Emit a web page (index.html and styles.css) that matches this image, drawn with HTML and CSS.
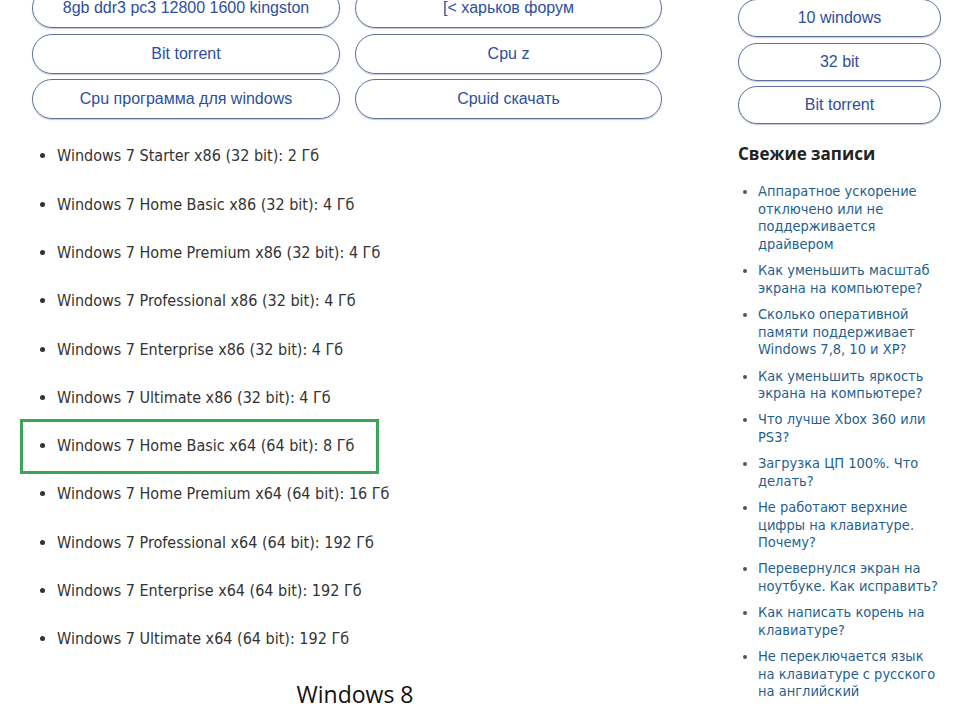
FILE: index.html
```html
<!DOCTYPE html>
<html lang="ru">
<head>
<meta charset="utf-8">
<title>Windows 7 память</title>
<link rel="stylesheet" href="styles.css">
</head>
<body>
<div class="page">
  <main class="content">
    <div class="tags">
      <a class="tag" href="#">8gb ddr3 pc3 12800 1600 kingston</a>
      <a class="tag" href="#">[&lt; харьков форум</a>
      <a class="tag" href="#">Bit torrent</a>
      <a class="tag" href="#">Cpu z</a>
      <a class="tag" href="#">Cpu программа для windows</a>
      <a class="tag" href="#">Cpuid скачать</a>
    </div>
    <ul class="editions">
      <li>Windows 7 Starter x86 (32 bit): 2 Гб</li>
      <li>Windows 7 Home Basic x86 (32 bit): 4 Гб</li>
      <li>Windows 7 Home Premium x86 (32 bit): 4 Гб</li>
      <li>Windows 7 Professional x86 (32 bit): 4 Гб</li>
      <li>Windows 7 Enterprise x86 (32 bit): 4 Гб</li>
      <li>Windows 7 Ultimate x86 (32 bit): 4 Гб</li>
      <li class="marked">Windows 7 Home Basic x64 (64 bit): 8 Гб</li>
      <li>Windows 7 Home Premium x64 (64 bit): 16 Гб</li>
      <li>Windows 7 Professional x64 (64 bit): 192 Гб</li>
      <li>Windows 7 Enterprise x64 (64 bit): 192 Гб</li>
      <li>Windows 7 Ultimate x64 (64 bit): 192 Гб</li>
    </ul>
    <h2 class="section">Windows 8</h2>
  </main>
  <aside class="sidebar">
    <div class="side-tags">
      <a class="tag" href="#">10 windows</a>
      <a class="tag" href="#">32 bit</a>
      <a class="tag" href="#">Bit torrent</a>
    </div>
    <h3 class="side-title">Свежие записи</h3>
    <ul class="recent">
      <li><a href="#">Аппаратное ускорение отключено или не поддерживается драйвером</a></li>
      <li><a href="#">Как уменьшить масштаб экрана на компьютере?</a></li>
      <li><a href="#">Сколько оперативной памяти поддерживает Windows 7,8, 10 и XP?</a></li>
      <li><a href="#">Как уменьшить яркость экрана на компьютере?</a></li>
      <li><a href="#">Что лучше Xbox 360 или PS3?</a></li>
      <li><a href="#">Загрузка ЦП 100%. Что делать?</a></li>
      <li><a href="#">Не работают верхние цифры на клавиатуре. Почему?</a></li>
      <li><a href="#">Перевернулся экран на ноутбуке. Как исправить?</a></li>
      <li><a href="#">Как написать корень на клавиатуре?</a></li>
      <li><a href="#">Не переключается язык на клавиатуре с русского на английский</a></li>
    </ul>
  </aside>
</div>
</body>
</html>
```

FILE: styles.css
```css
html, body {
  margin: 0;
  padding: 0;
  background: #ffffff;
  overflow: hidden;
}
.page {
  display: flex;
  width: 960px;
  height: 708px;
  overflow: hidden;
}
.content {
  width: 646px;
  margin-left: 32px;
  flex: none;
}
.tags {
  display: grid;
  grid-template-columns: 308px 307px;
  column-gap: 15px;
  row-gap: 5.7px;
  margin-top: -12px;
}
.tag {
  display: flex;
  align-items: center;
  justify-content: center;
  height: 40px;
  box-sizing: border-box;
  border: 1px solid #5d7199;
  border-radius: 20px;
  color: #2c4f9e;
  text-decoration: none;
  font-family: "Liberation Sans", Arial, sans-serif;
  font-size: 16px;
  box-shadow: 0 1px 1px rgba(80, 100, 140, 0.35);
}
.editions {
  margin: 13px 0 0 0;
  padding: 0 0 0 25px;
  font-family: "DejaVu Sans Condensed", "DejaVu Sans", sans-serif;
  font-size: 16px;
  color: #333333;
}
.editions li {
  line-height: 48.3px;
  position: relative;
}
.editions li.marked::after {
  content: "";
  position: absolute;
  left: -37px;
  top: -3px;
  width: 359px;
  height: 55px;
  box-sizing: border-box;
  border: 3px solid #3aa655;
}
.section {
  margin: 17px 0 0 0;
  padding-left: 0;
  text-align: center;
  font-family: "Open Sans", "Liberation Sans", sans-serif;
  font-weight: 400;
  font-size: 23px;
  line-height: 26px;
  color: #111111;
}
.sidebar {
  width: 203px;
  margin-left: 60px;
  flex: none;
}
.side-tags {
  display: flex;
  flex-direction: column;
  gap: 5.5px;
  margin-top: -1px;
}
.side-tags .tag {
  height: 38px;
  border-radius: 19px;
}
.side-title {
  margin: 19px 0 0 0;
  font-family: "Open Sans", "Liberation Sans", sans-serif;
  font-weight: 700;
  font-size: 17px;
  line-height: 22px;
  color: #222222;
}
.recent {
  margin: 18px 0 0 0;
  padding: 0 0 0 20px;
  font-family: "DejaVu Sans Condensed", "DejaVu Sans", sans-serif;
  font-size: 14.5px;
  line-height: 17.7px;
  color: #555555;
}
.recent li {
  margin-bottom: 8.4px;
}
.recent a {
  color: #1f5f8f;
  text-decoration: none;
}
```
